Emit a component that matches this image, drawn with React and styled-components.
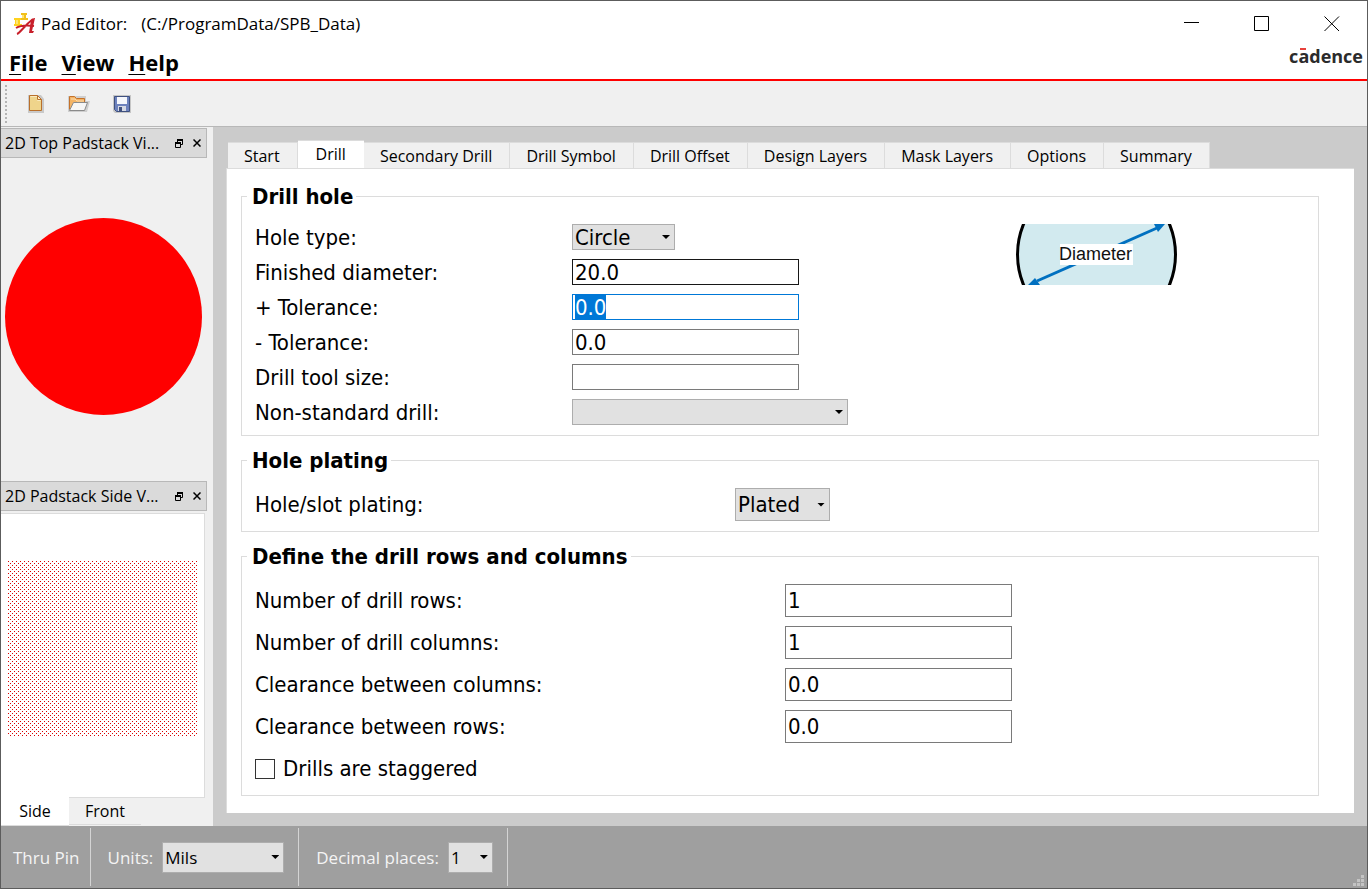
import React, {useEffect, useRef, useState} from 'react';
import styled, {createGlobalStyle} from 'styled-components';

const formFont = '"DejaVu Sans Condensed", "DejaVu Sans", sans-serif';
const shellFont = '"Open Sans", "Noto Sans", sans-serif';

const GlobalStyle = createGlobalStyle`
  * {
    box-sizing: border-box;
  }

  body {
    margin: 0;
    color: #000;
    font-family: ${formFont};
    font-size: 16px;
  }

  button, input, select {
    margin: 0;
    color: inherit;
    font: inherit;
  }
`;

const Window = styled.div`
  display: flex;
  flex-direction: column;
  min-height: 100vh;
  border: 1px solid #5c5c5c;
  background: #fff;
`;

const TitleBar = styled.header`
  display: flex;
  align-items: center;
  height: 45px;
  padding-left: 12px;
  font-family: ${shellFont};
  font-size: 17px;
`;

const Title = styled.h1`
  display: flex;
  flex: 1;
  gap: 14px;
  margin: 0 0 0 4px;
  font-size: 17px;
  font-weight: 400;
`;

const WindowButton = styled.button`
  display: flex;
  align-items: center;
  justify-content: center;
  width: 70px;
  height: 45px;
  padding: 0;
  border: 0;
  background: none;

  &:hover {
    background: #e5e5e5;
  }
`;

const MenuBar = styled.nav`
  display: flex;
  align-items: center;
  gap: 14px;
  height: 35px;
  padding: 0 4px 2px 8px;
  border-bottom: 2px solid #f00;
  font-family: ${shellFont};
`;

const MenuButton = styled.button`
  padding: 0;
  border: 0;
  background: none;
  font-size: 22px;
  font-weight: 700;
  line-height: 30px;

  &::first-letter {
    text-decoration: underline;
    text-decoration-thickness: 1px;
    text-underline-offset: 3px;
  }
`;

const Brand = styled.span`
  margin: 0 0 12px auto;
  color: #2b2b2b;
  font-size: 18px;
  font-weight: 700;
  line-height: 20px;
`;

const BrandBar = styled.span`
  position: relative;

  &::before {
    content: '';
    position: absolute;
    top: 4px;
    left: 2px;
    width: 6px;
    height: 2px;
    background: #e8413c;
  }
`;

const ToolBar = styled.div`
  display: flex;
  align-items: center;
  height: 46px;
  padding-left: 4px;
  border-bottom: 1px solid #b8b8b8;
  background: #f0f0f0;
`;

const Grip = styled.span`
  width: 2px;
  height: 38px;
  margin-right: 7px;
  background: repeating-linear-gradient(#b4b4b4 0 2px, transparent 2px 4px);
`;

const ToolButton = styled.button`
  display: flex;
  align-items: center;
  justify-content: center;
  width: 43px;
  height: 40px;
  padding: 0;
  border: 0;
  background: none;

  &:hover {
    background: #dcebf7;
  }
`;

const Body = styled.div`
  display: flex;
  flex: 1;
`;

const Docks = styled.aside`
  display: flex;
  flex-direction: column;
  flex: none;
  width: 212px;
  padding: 1px 6px 0 0;
  background: #f0f0f0;
`;

const Dock = styled.section`
  display: flex;
  flex-direction: column;
  flex: ${({$grow}) => ($grow ? 1 : 'none')};
`;

const DockHeader = styled.div`
  display: flex;
  align-items: center;
  height: 30px;
  padding: 0 0 0 4px;
  border: 1px solid #b8b8b8;
  border-left: 0;
  background: #dadada;
`;

const DockTitle = styled.h2`
  flex: 1;
  margin: 0;
  font-family: ${shellFont};
  font-size: 16px;
  font-weight: 400;
  white-space: nowrap;
`;

const DockButton = styled.button`
  display: flex;
  align-items: center;
  justify-content: center;
  width: 18px;
  height: 18px;
  padding: 0;
  border: 0;
  background: none;
`;

const TopView = styled.div`
  display: flex;
  flex: 1;
  align-items: center;
  justify-content: center;
  padding: 0 1px 6px 0;
`;

const SideView = styled.div`
  height: 285px;
  margin: 2px 2px 0 0;
  padding: 47px 6px 0 7px;
  border: 1px solid #dcdcdc;
  border-left: 0;
  background: #fff;

  svg {
    display: block;
  }
`;

const SideTabs = styled.div`
  display: flex;
  align-items: flex-start;
  height: 28px;
`;

const SideTab = styled.button`
  width: ${({$active}) => ($active ? '68px' : '72px')};
  height: ${({$active}) => ($active ? '29px' : '27px')};
  margin-top: ${({$active}) => ($active ? '-1px' : 0)};
  padding: 0;
  border: 0 solid #dcdcdc;
  border-width: 0 0 1px;
  background: ${({$active}) => ($active ? '#fff' : '#f0f0f0')};
  font-family: ${shellFont};
  font-size: 16px;
`;

const Main = styled.main`
  display: flex;
  flex: 1;
  flex-direction: column;
  min-width: 0;
  padding: 13px;
  background: #cbcbcb;
`;

const TabList = styled.div`
  display: flex;
  align-items: flex-end;
  height: 28px;
  padding-left: 2px;
`;

const Tab = styled.button`
  height: ${({$active}) => ($active ? '29px' : '26px')};
  margin-bottom: ${({$active}) => ($active ? '-1px' : 0)};
  padding: ${({$active}) => ($active ? '0 18px 2px' : '0 17px 0 16px')};
  border: 0 solid #dcdcdc;
  border-width: ${({$active}) => ($active ? '1px 0 0' : '1px 1px 0 0')};
  background: ${({$active}) => ($active ? '#fff' : '#f0f0f0')};
  font-family: ${shellFont};
  font-size: 16px;
  white-space: nowrap;
`;

const TabPanel = styled.div`
  display: flex;
  flex: 1;
  flex-direction: column;
  gap: 11px;
  padding: 14px 35px 17px 14px;
  border: 1px solid #dcdcdc;
  border-width: 1px 0 0 1px;
  background: #fff;
`;

const Group = styled.fieldset`
  min-width: 0;
  margin: 0;
  padding: 0 0 10px;
  border: 1px solid #dcdcdc;
`;

const Legend = styled.legend`
  margin-left: 5px;
  padding: 2px 3px 0 5px;
  font-size: 22px;
  font-weight: 700;
  line-height: 24px;
`;

const GroupBody = styled.div`
  display: grid;
  grid-template-columns: ${({$columns}) => $columns};
  padding: 15px 0 0 13px;
  font-size: 22px;
`;

const Stack = styled.div`
  display: grid;
  grid-auto-rows: ${({$row}) => $row}px;
  align-items: center;
  justify-items: start;
  gap: 9px;
`;

const TextInput = styled.input`
  width: 227px;
  height: 100%;
  padding: 0 2px;
  border: 1px solid ${({$strong}) => ($strong ? '#171717' : '#7a7a7a')};
  border-radius: 0;
  background: #fff;
  outline: 0;

  &:focus {
    border-color: #0078d7;
  }

  &::selection {
    background: #0078d7;
    color: #fff;
  }
`;

const SelectBox = styled.span`
  position: relative;
  display: block;
  width: ${({$width}) => $width}px;
  height: ${({$height}) => $height || '100%'};

  &::after {
    content: '';
    position: absolute;
    top: calc(50% - 2px);
    right: 5px;
    width: 8px;
    height: 4px;
    background: #000;
    clip-path: polygon(0 0, 100% 0, 50% 100%);
    pointer-events: none;
  }
`;

const NativeSelect = styled.select`
  display: block;
  width: 100%;
  height: 100%;
  padding: 0 18px 0 2px;
  border: 1px solid #adadad;
  border-radius: 0;
  background: #e1e1e1;
  color: #000;
  appearance: none;
`;

const CheckLabel = styled.label`
  display: flex;
  align-items: center;
  gap: 8px;
`;

const CheckBox = styled.input`
  width: 20px;
  height: 20px;
  border: 1px solid #333;
  background: #fff;
  appearance: none;

  &:checked {
    background: #333;
    box-shadow: inset 0 0 0 4px #fff;
  }
`;

const StatusBar = styled.footer`
  display: flex;
  height: 62px;
  padding: 2px 0;
  background: #9f9f9f;
  color: #f4f4f4;
  font-family: ${shellFont};
  font-size: 17px;
`;

const StatusItem = styled.div`
  display: flex;
  align-items: center;
  gap: 9px;
  padding: ${({$first}) => ($first ? '0 10px 0 12px' : '0 14px 0 17px')};
  border-right: 1px solid #d4d4d4;
  white-space: nowrap;
`;

const SizeGrip = styled.svg`
  align-self: flex-end;
  margin: 0 3px 0 auto;
`;

const Select = ({width, height, options, ...rest}) => (
  <SelectBox $width={width} $height={height}>
    <NativeSelect {...rest}>
      {options.map(item => <option key={item}>{item}</option>)}
    </NativeSelect>
  </SelectBox>
);

const AppIcon = () => (
  <svg width="24" height="24" viewBox="0 0 24 24" aria-hidden="true">
    <path d="M8 1h6v2h-1v3h2v2H7V6h2V3H8z" fill="#f2c01c"/>
    <path d="M1 6h7v2H7v4h2v2H1v-2h1V8H1z" fill="#ffd21f"/>
    <path d="M9 3h2v3H9zM3 8h2v4H3z" fill="#ffe672"/>
    <path d="M4 22c3-1 7-8 16-15M3 16c5-3 11-3 18-2" fill="none" stroke="#c8202b" strokeWidth="2"/>
    <path d="M21 6l1 0-3 13 2 0-1 2h-4l2-13z" fill="#c8202b"/>
  </svg>
);

const NewIcon = () => (
  <svg width="18" height="20" viewBox="0 0 18 20" aria-hidden="true">
    <path d="M1 1h13l3 4v14H1z" fill="#c9c9c9"/>
    <path d="M2.500 1.500h8l4 4v11h-12z" fill="#efd48b" stroke="#b9702c"/>
    <path d="M3.500 2.500h7v4h3" fill="none" stroke="#f9eabf"/>
    <path d="M10.500 1.500v4h4z" fill="#fff3cf" stroke="#b9702c"/>
  </svg>
);

const OpenIcon = () => (
  <svg width="23" height="20" viewBox="0 0 23 20" aria-hidden="true">
    <path d="M1 2h18v5h4l-3 11H1z" fill="#cfcfcf"/>
    <path d="M2.500 15.500v-13h5l2 2h8v4" fill="#f3b466" stroke="#c4722b"/>
    <path d="M4 5h4l2 2h7" fill="none" stroke="#fbdcae"/>
    <path d="M2.500 16.500l4-8h14l-3 8z" fill="#f6f6f6" stroke="#8b8b8b"/>
  </svg>
);

const SaveIcon = () => (
  <svg width="20" height="20" viewBox="0 0 20 20" aria-hidden="true">
    <path d="M1 1h18v18H3l-2-2z" fill="#c6c6c6"/>
    <path d="M2.500 2.500h15v15h-13l-2-2z" fill="#6d82bd" stroke="#3f5180"/>
    <path d="M5 3h10v7H5z" fill="#f5f7fc"/>
    <path d="M6 12h8v5H6z" fill="#d5d9e4"/>
    <path d="M7 13h3v4H7z" fill="#40517f"/>
  </svg>
);

const FloatIcon = () => (
  <svg width="9" height="9" viewBox="0 0 9 9" aria-hidden="true">
    <path d="M2.500 3V1.500h5v4H6M2 1h6" fill="none" stroke="#000"/>
    <path d="M.5 4v4.500h5V4M0 4h6" fill="none" stroke="#000"/>
    <path d="M0 3h6v2H0zM2 0h6v2H2z" fill="#000"/>
  </svg>
);

const CloseIcon = () => (
  <svg width="8" height="8" viewBox="0 0 8 8" aria-hidden="true">
    <path d="M.5.5l7 7M7.500.5l-7 7" stroke="#000" strokeWidth="1.500"/>
  </svg>
);

const DiameterDrawing = () => (
  <svg width="161" height="61" viewBox="0 0 161 61" role="img" aria-label="Circle hole diameter">
    <circle cx="80.500" cy="30.500" r="79" fill="#d2eaef" stroke="#000" strokeWidth="3"/>
    <path d="M21 57L141 4" stroke="#0070c0" strokeWidth="3"/>
    <path d="M149 0h-11l4 8zM12 61h12l-5-7z" fill="#0070c0"/>
    <rect x="44" y="20" width="73" height="21" fill="#fff"/>
    <text x="43" y="36" fontFamily="Liberation Sans, Arial, sans-serif" fontSize="18" fill="#111">Diameter</text>
  </svg>
);

const Stipple = () => (
  <svg width="190" height="176" aria-hidden="true">
    <defs>
      <pattern id="stipple" width="4" height="4" patternUnits="userSpaceOnUse">
        <path d="M0 0h1v1H0zM2 2h1v1H2z" fill="#dc0000"/>
      </pattern>
    </defs>
    <rect width="190" height="176" fill="url(#stipple)" shapeRendering="crispEdges"/>
  </svg>
);

const DockBar = ({title}) => (
  <DockHeader>
    <DockTitle>{title}</DockTitle>
    <DockButton aria-label="Float"><FloatIcon/></DockButton>
    <DockButton aria-label="Close"><CloseIcon/></DockButton>
  </DockHeader>
);

const tabs = [
  'Start', 'Drill', 'Secondary Drill', 'Drill Symbol', 'Drill Offset',
  'Design Layers', 'Mask Layers', 'Options', 'Summary',
];

const drillArray = [
  {id: 'rows', label: 'Number of drill rows:', value: '1'},
  {id: 'columns', label: 'Number of drill columns:', value: '1'},
  {id: 'column-gap', label: 'Clearance between columns:', value: '0.0'},
  {id: 'row-gap', label: 'Clearance between rows:', value: '0.0'},
];

const App = () => {
  const [tab, setTab] = useState('Drill');
  const [view, setView] = useState('Side');
  const refTolerance = useRef(null);

  useEffect(() => {
    refTolerance.current.focus();
    refTolerance.current.select();
  }, []);

  return (
    <>
      <GlobalStyle/>
      <Window>
        <TitleBar>
          <AppIcon/>
          <Title><span>Pad Editor:</span><span>(C:/ProgramData/SPB_Data)</span></Title>
          <WindowButton aria-label="Minimize">
            <svg width="16" height="16"><path d="M0 6.500h15" stroke="#000"/></svg>
          </WindowButton>
          <WindowButton aria-label="Maximize">
            <svg width="16" height="16"><path d="M.5.5h14v14H.5z" fill="none" stroke="#000"/></svg>
          </WindowButton>
          <WindowButton aria-label="Close">
            <svg width="16" height="16"><path d="M.5.5l14.500 14.500M15 .5L.5 15" stroke="#000"/></svg>
          </WindowButton>
        </TitleBar>

        <MenuBar>
          <MenuButton>File</MenuButton>
          <MenuButton>View</MenuButton>
          <MenuButton>Help</MenuButton>
          <Brand>c<BrandBar>a</BrandBar>dence</Brand>
        </MenuBar>

        <ToolBar>
          <Grip/>
          <ToolButton aria-label="New"><NewIcon/></ToolButton>
          <ToolButton aria-label="Open"><OpenIcon/></ToolButton>
          <ToolButton aria-label="Save"><SaveIcon/></ToolButton>
        </ToolBar>

        <Body>
          <Docks>
            <Dock $grow>
              <DockBar title="2D Top Padstack Vi..."/>
              <TopView>
                <svg width="197" height="197" role="img" aria-label="Top view">
                  <circle cx="98.500" cy="98.500" r="98.500" fill="#f00"/>
                </svg>
              </TopView>
            </Dock>
            <Dock>
              <DockBar title="2D Padstack Side V..."/>
              <SideView><Stipple/></SideView>
              <SideTabs role="tablist">
                {['Side', 'Front'].map(item => (
                  <SideTab key={item} role="tab" aria-selected={view === item} $active={view === item} onClick={() => setView(item)}>
                    {item}
                  </SideTab>
                ))}
              </SideTabs>
            </Dock>
          </Docks>

          <Main>
            <TabList role="tablist">
              {tabs.map(item => (
                <Tab key={item} role="tab" aria-selected={tab === item} $active={tab === item} onClick={() => setTab(item)}>
                  {item}
                </Tab>
              ))}
            </TabList>
            <TabPanel role="tabpanel">
              <Group>
                <Legend>Drill hole</Legend>
                <GroupBody $columns="317fr 444fr 302fr">
                  <Stack $row={26}>
                    <label htmlFor="hole-type">Hole type:</label>
                    <label htmlFor="diameter">Finished diameter:</label>
                    <label htmlFor="plus">+ Tolerance:</label>
                    <label htmlFor="minus">- Tolerance:</label>
                    <label htmlFor="tool-size">Drill tool size:</label>
                    <label htmlFor="non-standard">Non-standard drill:</label>
                  </Stack>
                  <Stack $row={26}>
                    <Select id="hole-type" width={103} options={['Circle', 'Square']}/>
                    <TextInput id="diameter" defaultValue="20.0" $strong/>
                    <TextInput id="plus" defaultValue="0.0" ref={refTolerance}/>
                    <TextInput id="minus" defaultValue="0.0"/>
                    <TextInput id="tool-size"/>
                    <Select id="non-standard" width={276} options={['', 'Laser', 'Plasma', 'Punch']}/>
                  </Stack>
                  <DiameterDrawing/>
                </GroupBody>
              </Group>

              <Group>
                <Legend>Hole plating</Legend>
                <GroupBody $columns="480fr 583fr">
                  <Stack $row={33}>
                    <label htmlFor="plating">Hole/slot plating:</label>
                  </Stack>
                  <Stack $row={33}>
                    <Select id="plating" width={95} options={['Plated', 'Non-Plated']}/>
                  </Stack>
                </GroupBody>
              </Group>

              <Group>
                <Legend>Define the drill rows and columns</Legend>
                <GroupBody $columns="530fr 533fr">
                  <Stack $row={33}>
                    {drillArray.map(({id, label}) => <label key={id} htmlFor={id}>{label}</label>)}
                    <CheckLabel><CheckBox type="checkbox"/>Drills are staggered</CheckLabel>
                  </Stack>
                  <Stack $row={33}>
                    {drillArray.map(({id, value}) => <TextInput key={id} id={id} defaultValue={value}/>)}
                  </Stack>
                </GroupBody>
              </Group>
            </TabPanel>
          </Main>
        </Body>

        <StatusBar>
          <StatusItem $first>Thru Pin</StatusItem>
          <StatusItem>
            <label htmlFor="units">Units:</label>
            <Select id="units" width={122} height="31px" options={['Mils', 'Inch', 'Millimeter']}/>
          </StatusItem>
          <StatusItem>
            <label htmlFor="places">Decimal places:</label>
            <Select id="places" width={45} height="31px" options={['1', '2', '3', '4']}/>
          </StatusItem>
          <SizeGrip width="11" height="11" aria-hidden="true">
            <path d="M8 0h3v3H8zM4 4h3v3H4zM8 4h3v3H8zM0 8h3v3H0zM4 8h3v3H4zM8 8h3v3H8z" fill="#c4c4c4"/>
          </SizeGrip>
        </StatusBar>
      </Window>
    </>
  );
};

export default App;
